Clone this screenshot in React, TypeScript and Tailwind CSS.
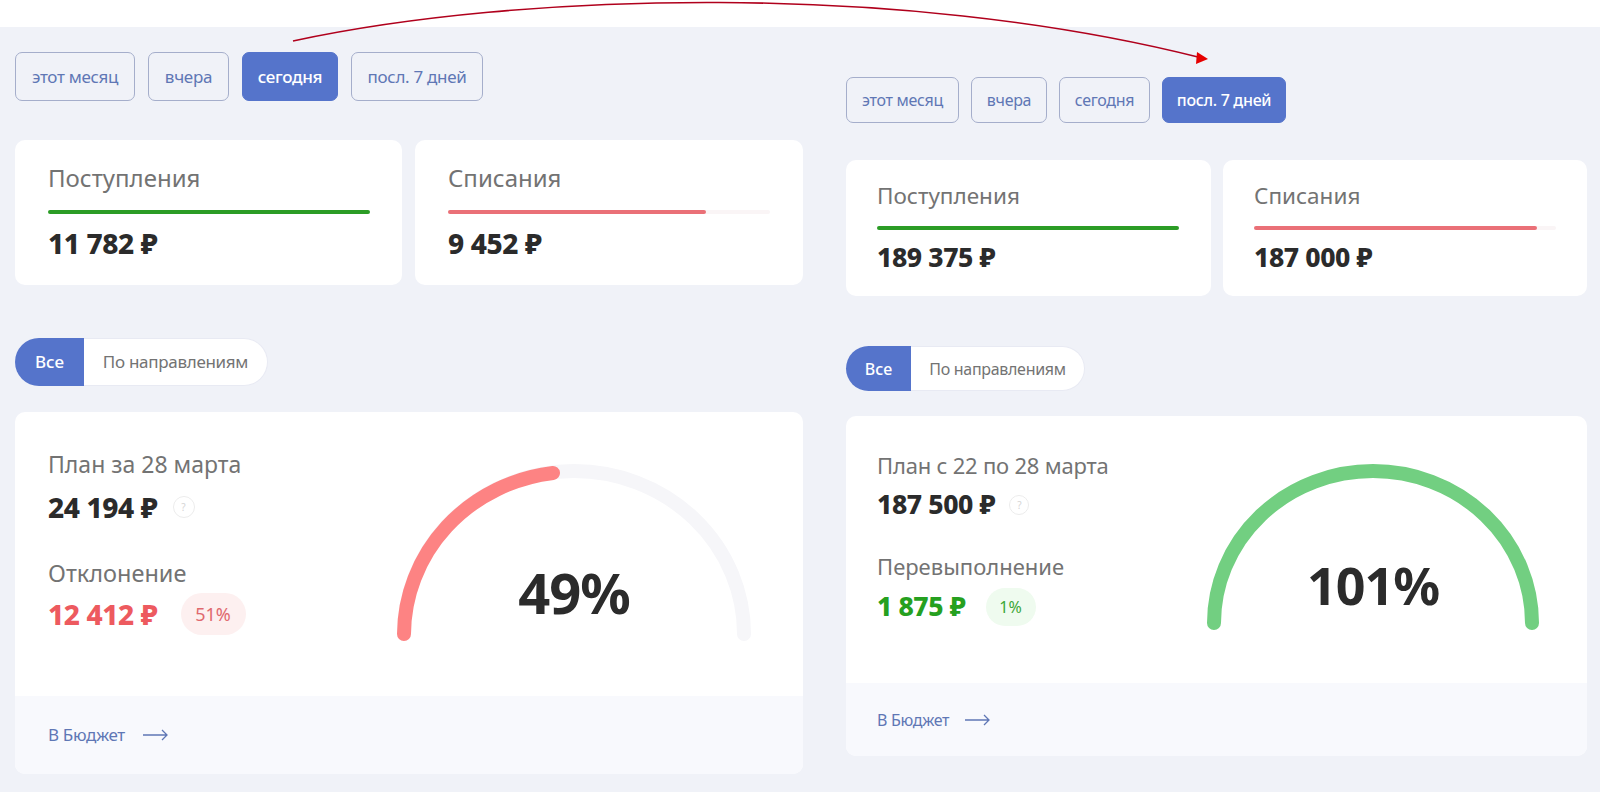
import React from 'react'

const font = { fontFamily: '"Noto Sans", sans-serif' }

type PanelProps = {
  active: number
  outerClass: string
  btnRow: string
  btnWidths: string[]
  btnText: string
  statRow: string
  statCard: [string, string]
  statLabel: string
  barRow: string
  value: string
  barWidth: string
  incomes: string
  expenses: string
  toggleRow: string
  toggle: string
  toggleAll: string
  toggleText: string
  card: string
  footer: string
  footerText: string
  arrowGap: string
  children: React.ReactNode
}

const buttons = ['этот месяц', 'вчера', 'сегодня', 'посл. 7 дней']

function Panel(p: PanelProps) {
  return (
    <div className={p.outerClass}>
      <div className={`flex ${p.btnRow}`}>
        {buttons.map((b, i) => (
          <div
            key={b}
            className={`flex items-center justify-center rounded-[7px] border tracking-[-0.3px] ${p.btnText} ${p.btnWidths[i]} ${
              i === p.active
                ? 'bg-[#5574cb] border-[#5574cb] text-white font-medium'
                : 'border-[#a5aecb] text-[#5f77b5]'
            }`}
          >
            {b}
          </div>
        ))}
      </div>

      <div className={`flex ${p.statRow}`}>
        <div className={`rounded-[10px] bg-white flex flex-col ${p.statCard[0]}`}>
          <div className={`text-[#737373] ${p.statLabel}`}>Поступления</div>
          <div className={`h-[4px] rounded-full bg-[#2b9c25] ${p.barRow} ${p.barWidth}`}></div>
          <div className={`font-extrabold text-[#2b2b2b] tracking-[-0.4px] ${p.value}`}>{p.incomes}</div>
        </div>
        <div className={`rounded-[10px] bg-white flex flex-col ${p.statCard[1]}`}>
          <div className={`text-[#737373] ${p.statLabel}`}>Списания</div>
          <div className={`h-[4px] rounded-full bg-[#faf5f6] ${p.barRow} ${p.barWidth}`}>
            <div className={`h-full rounded-full bg-[#ea7077] ${p.active === 2 ? 'w-[258px]' : 'w-[283px]'}`}></div>
          </div>
          <div className={`font-extrabold text-[#2b2b2b] tracking-[-0.4px] ${p.value}`}>{p.expenses}</div>
        </div>
      </div>

      <div className={`flex ${p.toggleRow} ${p.toggle}`}>
        <div className={`bg-[#5574cb] rounded-l-full text-white font-medium flex items-center justify-center ${p.toggleAll} ${p.toggleText}`}>Все</div>
        <div className={`flex-1 flex items-center justify-center bg-white rounded-r-full border border-l-0 border-[#e8eaf3] text-[#737373] tracking-[-0.3px] ${p.toggleText}`}>По направлениям</div>
      </div>

      <div className={`rounded-[10px] bg-white overflow-hidden flex flex-col ${p.card}`}>
        <div className="flex-1 relative">{p.children}</div>
        <div className={`bg-[#f8f9fd] flex items-center ${p.footer}`}>
          <span className={`text-[#5f77b5] tracking-[-0.3px] ${p.footerText}`}>В Бюджет</span>
          <svg className={p.arrowGap} width="25" height="12" viewBox="0 0 25 12" fill="none" stroke="#5f77b5" strokeWidth="1.3">
            <path d="M0 6h24M19 1l5 5-5 5" />
          </svg>
        </div>
      </div>
    </div>
  )
}

function Help({ cls }: { cls: string }) {
  return (
    <span className={`rounded-full border border-[#ececec] flex items-center justify-center text-[10px] text-[#d5d5d5] ${cls}`}>?</span>
  )
}

export default function App() {
  return (
    <div className="relative w-[1600px] h-[792px] overflow-hidden bg-[#f0f2f8]" style={font}>
      <div className="h-[27px] bg-white"></div>

      <div className="flex">
        <Panel
          active={2}
          outerClass="w-[788px] ml-[15px] pt-[25px]"
          btnRow="h-[49px] gap-[13px]"
          btnWidths={['w-[120px]', 'w-[81px]', 'w-[96px]', 'w-[132px]']}
          btnText="text-[17px]"
          statRow="mt-[39px] h-[145px] gap-[13px]"
          statCard={['w-[387px] pl-[33px] pr-[33px]', 'w-[388px] pl-[33px] pr-[33px]']}
          statLabel="text-[24px] leading-[30px] mt-[23px]"
          barRow="mt-[17px]"
          barWidth="w-[322px]"
          value="text-[28px] leading-[36px] mt-[11px]"
          incomes="11 782 ₽"
          expenses="9 452 ₽"
          toggleRow="mt-[53px]"
          toggle="w-[253px] h-[48px]"
          toggleAll="w-[69px]"
          toggleText="text-[17px]"
          card="mt-[26px] h-[362px]"
          footer="h-[78px] pl-[33px]"
          footerText="text-[17px]"
          arrowGap="ml-[18px]"
        >
          <div className="flex">
            <div className="pl-[33px] pt-[37px] w-[350px]">
              <div className="text-[23px] leading-[30px] text-[#737373]">План за 28 марта</div>
              <div className="flex items-center mt-[13px] h-[30px]">
                <span className="text-[28px] font-extrabold text-[#2b2b2b] tracking-[-0.4px]">24 194 ₽</span>
                <Help cls="ml-[15px] w-[22px] h-[22px]" />
              </div>
              <div className="text-[23.5px] leading-[30px] text-[#737373] mt-[36px]">Отклонение</div>
              <div className="flex items-center mt-[5px] h-[42px]">
                <span className="text-[28px] font-extrabold text-[#ed5a5f] tracking-[-0.4px]">12 412 ₽</span>
                <span className="ml-[23px] w-[65px] h-[42px] rounded-full bg-[#fdf0f0] flex items-center justify-center text-[18px] text-[#e0696e]">51%</span>
              </div>
            </div>
            <div className="relative mt-[52px] ml-[32px]">
              <svg width="354" height="180" viewBox="397 464 354 180" fill="none" strokeWidth="14" strokeLinecap="round">
                <path d="M404 634A170 163 0 0 1 744 634" stroke="#f6f6f9" />
                <path d="M404 634A170 163 0 0 1 553 473" stroke="#fd8383" />
              </svg>
              <div className="absolute left-0 right-0 top-[92px] text-center text-[56px] leading-[72px] font-bold text-[#2b2b2b] tracking-[-1px]">49%</div>
            </div>
          </div>
        </Panel>

        <Panel
          active={3}
          outerClass="w-[741px] ml-[43px] pt-[50px]"
          btnRow="h-[46px] gap-[12px]"
          btnWidths={['w-[113px]', 'w-[76px]', 'w-[91px]', 'w-[124px]']}
          btnText="text-[16px]"
          statRow="mt-[37px] h-[136px] gap-[12px]"
          statCard={['w-[365px] pl-[31px] pr-[31px]', 'w-[364px] pl-[31px] pr-[31px]']}
          statLabel="text-[22.5px] leading-[28px] mt-[22px]"
          barRow="mt-[16px]"
          barWidth="w-[302px]"
          value="text-[26.5px] leading-[34px] mt-[10px]"
          incomes="189 375 ₽"
          expenses="187 000 ₽"
          toggleRow="mt-[50px]"
          toggle="w-[239px] h-[45px]"
          toggleAll="w-[65px]"
          toggleText="text-[16px]"
          card="mt-[25px] h-[340px]"
          footer="h-[73px] pl-[31px]"
          footerText="text-[16px]"
          arrowGap="ml-[16px]"
        >
          <div className="flex">
            <div className="pl-[31px] pt-[34px] w-[340px]">
              <div className="text-[22px] leading-[30px] text-[#737373] tracking-[-0.2px]">План с 22 по 28 марта</div>
              <div className="flex items-center mt-[10px] h-[30px]">
                <span className="text-[26.5px] font-extrabold text-[#2b2b2b] tracking-[-0.4px]">187 500 ₽</span>
                <Help cls="ml-[14px] w-[20px] h-[20px]" />
              </div>
              <div className="text-[22px] leading-[30px] text-[#737373] mt-[31px]">Перевыполнение</div>
              <div className="flex items-center mt-[7px] h-[38px]">
                <span className="text-[26.5px] font-extrabold text-[#26a01f] tracking-[-0.4px]">1 875 ₽</span>
                <span className="ml-[20px] w-[50px] h-[38px] rounded-full bg-[#effbef] flex items-center justify-center text-[16px] text-[#3da838]">1%</span>
              </div>
            </div>
            <div className="relative mt-[48px] ml-[21px]">
              <svg width="332" height="168" viewBox="1207 464 332 168" fill="none" strokeWidth="14" strokeLinecap="round">
                <path d="M1214 623A159 152 0 0 1 1532 623" stroke="#72cf81" />
              </svg>
              <div className="absolute left-0 right-0 top-[87px] text-center text-[52px] leading-[68px] font-bold text-[#2b2b2b] tracking-[-1px]">101%</div>
            </div>
          </div>
        </Panel>
      </div>

      {/* annotation arrow drawn over both screenshots */}
      <svg className="absolute left-0 top-0 pointer-events-none" width="1600" height="792" fill="none">
        <path d="M293 41C520 -8 900 -18 1198 57" stroke="#b0001c" strokeWidth="1.6" />
        <path d="M1208 59L1196 64L1197 52Z" fill="#e60000" />
      </svg>
    </div>
  )
}
